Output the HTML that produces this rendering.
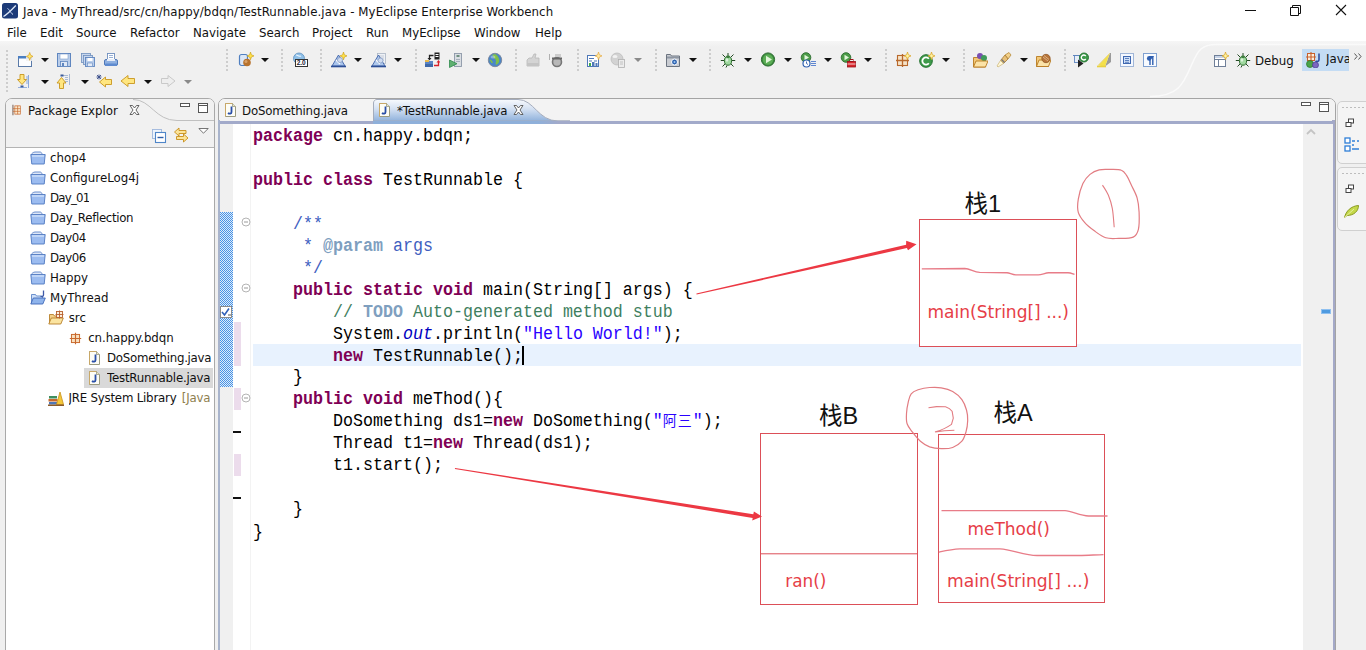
<!DOCTYPE html>
<html>
<head>
<meta charset="utf-8">
<title>Java - MyThread/src/cn/happy/bdqn/TestRunnable.java - MyEclipse Enterprise Workbench</title>
<style>
html,body{margin:0;padding:0;}
body{width:1366px;height:650px;overflow:hidden;background:#f0f0f0;position:relative;
 font-family:"DejaVu Sans","Liberation Sans","Noto Sans CJK SC",sans-serif;font-size:11.8px;color:#000;}
.abs{position:absolute;}
#titlebar{left:0;top:0;width:1366px;height:22px;background:#fff;}
#title{left:23px;top:4px;height:16px;line-height:16px;font-size:11.8px;letter-spacing:.07px;white-space:nowrap;color:#111;}
#menubar{left:0;top:22px;width:1366px;height:19px;background:#fff;}
.mi{position:absolute;top:3px;height:16px;line-height:16px;font-size:11.8px;white-space:nowrap;color:#111;}
#toolbar{left:0;top:41px;width:1366px;height:57px;background:linear-gradient(#f6f6f6,#f0f0f0 6px);}
.ic{position:absolute;width:16px;height:16px;}
.dd{position:absolute;width:0;height:0;border-left:4px solid transparent;border-right:4px solid transparent;border-top:4px solid #111;}
.dd.g{border-top-color:#8a8a8a;}
.sep{position:absolute;width:2px;height:20px;background-image:repeating-linear-gradient(to bottom,#cdcdcd 0,#cdcdcd 2px,transparent 2px,transparent 4px);}
/* package explorer */
#pe{left:5px;top:98px;width:210px;height:560px;background:#fff;border:1px solid #a9a9a9;border-radius:7px 7px 0 0;box-sizing:border-box;}
.tr{position:absolute;height:20px;line-height:20px;font-size:11.8px;white-space:nowrap;color:#111;}
/* editor */
#ed{left:218px;top:98px;width:1118px;height:560px;background:#fff;border:1px solid #a4a4a4;border-radius:7px 7px 0 0;box-sizing:border-box;}
#code{left:253px;top:125.7px;font-family:"Liberation Mono","Noto Sans CJK SC",monospace;font-size:16.667px;line-height:20.952px;white-space:pre;color:#000;transform:scaleY(1.05);transform-origin:0 0;}
#code .cj{font-size:14px;letter-spacing:1px;}
#code b{color:#7f0055;font-weight:bold;}
#code .c{color:#3f7f5f;}
#code .j{color:#3f5fbf;}
#code .jt{color:#7f9fbf;font-weight:bold;}
#code .s{color:#2a00ff;}
#code .f{color:#0000c0;font-style:italic;}
.red{fill:none;stroke:#e8474a;}
</style>
</head>
<body>
<!-- TITLE BAR -->
<div id="titlebar" class="abs">
  <svg class="abs" style="left:2px;top:3px" width="16" height="16" viewBox="0 0 16 16"><rect x="0" y="0" width="16" height="15.500" rx="2.500" fill="#1d3b79"/><path d="M1.500 13.500 C5 11.500 9.500 7 13.800 2.500" stroke="#dfe9f8" stroke-width="1.300" fill="none"/><path d="M5.500 5.500 C7.500 7 8 7.500 8.300 8.300 C8.800 9.500 9.500 10.500 11 11.500" stroke="#cfdcf2" stroke-width="1" fill="none"/></svg>
  <div id="title" class="abs">Java - MyThread/src/cn/happy/bdqn/TestRunnable.java - MyEclipse Enterprise Workbench</div>
  <svg class="abs" style="left:1240px;top:0" width="126" height="22" viewBox="0 0 126 22">
    <path d="M5 10.5H16" stroke="#111" stroke-width="1"/>
    <path d="M50.500 7.500h8v8h-8z M52.500 7.500v-2h8v8h-2" stroke="#111" stroke-width="1" fill="none"/>
    <path d="M96 5L106 15M106 5L96 15" stroke="#111" stroke-width="1.1"/>
  </svg>
</div>
<!-- MENU BAR -->
<div id="menubar" class="abs">
  <span class="mi" style="left:7px">File</span>
  <span class="mi" style="left:40px">Edit</span>
  <span class="mi" style="left:76px">Source</span>
  <span class="mi" style="left:130px">Refactor</span>
  <span class="mi" style="left:193px">Navigate</span>
  <span class="mi" style="left:259px">Search</span>
  <span class="mi" style="left:312px">Project</span>
  <span class="mi" style="left:366px">Run</span>
  <span class="mi" style="left:402px">MyEclipse</span>
  <span class="mi" style="left:474px">Window</span>
  <span class="mi" style="left:535px">Help</span>
</div>
<!-- TOOLBAR -->
<div id="toolbar" class="abs">
<div class="abs" style="left:1302px;top:8px;width:47px;height:22px;background:#c4dcf4;"></div>
<i class="sep" style="left:6px;top:9px;height:44px"></i>
<svg class="ic" style="left:17px;top:11px;width:16px;height:16px" viewBox="0 0 16 16" preserveAspectRatio="none" ><rect x="1.500" y="4.500" width="13" height="10" fill="#fcfdff" stroke="#5a7aa8"/><rect x="1" y="4" width="14" height="2.500" fill="#4a7ec2"/><rect x="9" y="0" width="7" height="9" fill="#f0f0f0" fill-opacity=".85"/><path d="M12.700 .5L13.600 3.200 16 4.400 13.600 5.500 12.700 8.300 11.800 5.500 9.400 4.400 11.800 3.200Z" fill="#ffe870" stroke="#d8a020" stroke-width=".7"/></svg>
<svg class="ic" style="left:56px;top:11px;width:16px;height:16px" viewBox="0 0 16 16" preserveAspectRatio="none" ><rect x="1.500" y="1.500" width="13" height="13" fill="#b9cdea" stroke="#5f86bf"/><rect x="4" y="2" width="8" height="5" fill="#fff" stroke="#7d9dcc" stroke-width=".6"/><rect x="4.500" y="9.500" width="7" height="5" fill="#dfe8f6" stroke="#5f86bf" stroke-width=".8"/><rect x="6" y="11" width="2" height="3" fill="#5f86bf"/></svg>
<svg class="ic" style="left:80px;top:11px;width:16px;height:16px" viewBox="0 0 16 16" preserveAspectRatio="none" ><rect x="1.500" y="1.500" width="9" height="9" fill="#c8d7ee" stroke="#6f8fbe" stroke-width=".8"/><rect x="3.500" y="3.500" width="9" height="9" fill="#c8d7ee" stroke="#6f8fbe" stroke-width=".8"/><rect x="5.500" y="5.500" width="9" height="9" fill="#b9cdea" stroke="#5f86bf" stroke-width=".9"/><rect x="7.500" y="6" width="5" height="3" fill="#fff"/><rect x="7.500" y="11" width="5" height="3.500" fill="#e4ecf8" stroke="#5f86bf" stroke-width=".6"/></svg>
<svg class="ic" style="left:103px;top:11px;width:16px;height:16px" viewBox="0 0 16 16" preserveAspectRatio="none" ><rect x="4.500" y="1.500" width="7" height="6" fill="#fff" stroke="#6f8fbe" stroke-width=".9"/><path d="M6 3.500h4M6 5.500h4" stroke="#7d9dcc" stroke-width=".8"/><rect x="1.500" y="7.500" width="13" height="6" rx="1.500" fill="#8fb0e0" stroke="#4f78b8"/><rect x="2" y="11.500" width="12" height="2.500" rx="1" fill="#5f8bd0"/><rect x="4" y="7" width="8" height="2" fill="#e8eef8"/></svg>
<svg class="ic" style="left:238px;top:11px;width:16px;height:16px" viewBox="0 0 16 16" preserveAspectRatio="none" ><rect x="1.500" y="2.500" width="8" height="11" rx="2" fill="#dbe7f7" stroke="#4f7fc0" stroke-width="1.200"/><circle cx="9" cy="10.500" r="3.800" fill="#b8732e"/><circle cx="8" cy="9.500" r="1.500" fill="#d9a066"/><path d="M12.500 0L13.400 2.800 16 3.900 13.400 5 12.500 7.800 11.600 5 9 3.900 11.600 2.800Z" fill="#ffe24a" stroke="#c89a10" stroke-width=".6"/></svg>
<svg class="ic" style="left:292px;top:11px;width:16px;height:16px" viewBox="0 0 16 16" preserveAspectRatio="none" ><circle cx="7" cy="6.500" r="5.500" fill="#8fc0e8" stroke="#5f90c0" stroke-width=".8"/><path d="M4 3c2 0 3 2 5 1M3 8c2-1 3 1 4 0" stroke="#e8f4ff" stroke-width="1.200" fill="none"/><rect x="3.500" y="7.500" width="12" height="7" fill="#fff" stroke="#333" stroke-width="1"/><text x="4.700" y="13.300" font-family="Liberation Sans,sans-serif" font-size="6.500" font-weight="bold" fill="#223">2.0</text></svg>
<svg class="ic" style="left:331px;top:11px;width:16px;height:16px" viewBox="0 0 16 16" preserveAspectRatio="none" ><path d="M7.500 3L1 14h13z" fill="#a9c4ec" stroke="#3f63a8" stroke-width=".9"/><path d="M0 14.500h15" stroke="#2d4f96" stroke-width="1.600"/><path d="M5 8l4 4" stroke="#fff" stroke-width="1.200"/><circle cx="9" cy="8" r="2.500" fill="#d0dcf0" stroke="#7d95c0" stroke-width=".7"/><path d="M12.500 0L13.400 2.800 16 3.900 13.400 5 12.500 7.800 11.600 5 9 3.900 11.600 2.800Z" fill="#ffe24a" stroke="#c89a10" stroke-width=".6"/></svg>
<svg class="ic" style="left:371px;top:11px;width:16px;height:16px" viewBox="0 0 16 16" preserveAspectRatio="none" ><rect x="6.500" y="1.500" width="8" height="10" fill="#eef1f5" stroke="#aab4c4" stroke-width=".8"/><path d="M8 4h5M8 6h5M8 8h5" stroke="#b8c2d0" stroke-width=".8"/><path d="M7.500 3L1 14h13z" fill="#a9c4ec" fill-opacity=".9" stroke="#3f63a8" stroke-width=".9"/><path d="M0 14.500h15" stroke="#2d4f96" stroke-width="1.600"/><path d="M5 8l4 4" stroke="#fff" stroke-width="1.200"/><circle cx="9.500" cy="8.500" r="2.500" fill="#d0dcf0" stroke="#7d95c0" stroke-width=".7"/></svg>
<svg class="ic" style="left:424px;top:11px;width:16px;height:16px" viewBox="0 0 16 16" preserveAspectRatio="none" ><rect x="10.500" y=".5" width="5" height="7" fill="#222"/><path d="M11.500 2.500h3M11.500 4.500h3" stroke="#fff" stroke-width="1"/><path d="M9.500 3.500H5.500v3" stroke="#222" stroke-width="1.300" fill="none"/><path d="M3.500 6h4L5.500 8.500z" fill="#222"/><rect x="1" y="9" width="8" height="6" fill="#5a84c4"/><rect x="1" y="8" width="4" height="2" fill="#e8b84a"/><rect x="1" y="12" width="8" height="3" fill="#3f68a8"/><path d="M10 13.500h4.500V10" stroke="#d8202a" stroke-width="1.300" fill="none"/><path d="M12.500 10.500h4L14.500 8z" fill="#d8202a"/></svg>
<svg class="ic" style="left:448px;top:11px;width:16px;height:16px" viewBox="0 0 16 16" preserveAspectRatio="none" ><rect x="6.500" y="1.500" width="7" height="13" fill="#d9dde2" stroke="#8d98a8" stroke-width=".9"/><rect x="8.500" y="3" width="3" height="2" fill="#6f8f7f"/><path d="M8 7.500h4M8 9.500h4" stroke="#9aa4b2" stroke-width=".8"/><path d="M1.500 8v7.500L9 11.700z" fill="#5fb070" stroke="#2f8a4c" stroke-width=".8"/></svg>
<svg class="ic" style="left:487px;top:11px;width:16px;height:16px" viewBox="0 0 16 16" preserveAspectRatio="none" ><circle cx="8" cy="8" r="6.700" fill="#4a86c8" stroke="#7d8aa0" stroke-width="1"/><path d="M5 3c2 1 1 3 3 4s0 4 1 6c2-1 4-3 3-6s-2-4-4-5z" fill="#7fc04a"/><path d="M3 8c1 1 2 1 2 3" stroke="#7fc04a" stroke-width="1.500" fill="none"/><ellipse cx="6" cy="5" rx="2.500" ry="1.500" fill="#fff" fill-opacity=".35"/></svg>
<svg class="ic" style="left:525px;top:11px;width:16px;height:16px" viewBox="0 0 16 16" preserveAspectRatio="none" ><path d="M2 8l2-2h3l2-4h2l-1 4h4v8H2z" fill="#d4d4d4" stroke="#b8b8b8" stroke-width=".8"/><rect x="2" y="11" width="12" height="3" fill="#c4c4c4"/></svg>
<svg class="ic" style="left:548px;top:11px;width:16px;height:16px" viewBox="0 0 16 16" preserveAspectRatio="none" ><path d="M1.500 2v6" stroke="#b0b0b0" stroke-width="1"/><circle cx="9" cy="10" r="4.500" fill="#b8b8b8" stroke="#777" stroke-width="1.600"/><path d="M4 6.500h10" stroke="#666" stroke-width="2"/><rect x="7" y="2" width="6" height="3" fill="#ccc"/></svg>
<svg class="ic" style="left:586px;top:11px;width:16px;height:16px" viewBox="0 0 16 16" preserveAspectRatio="none" ><rect x="1.500" y="3.500" width="11" height="11" fill="#fff" stroke="#4f78b8" stroke-width="1"/><path d="M3 6.500h5M3 9h3M8 9h3" stroke="#4f78b8" stroke-width="1.200"/><rect x="3" y="11" width="2" height="3" fill="#3fae49"/><rect x="6" y="10" width="2.500" height="4" fill="#4f78b8"/><rect x="9.500" y="11" width="2" height="3" fill="#4f78b8"/><path d="M12.500 0L13.400 2.800 16 3.900 13.400 5 12.500 7.800 11.600 5 9 3.900 11.600 2.800Z" fill="#ffe9a0" stroke="#e0a030" stroke-width=".6"/></svg>
<svg class="ic" style="left:610px;top:11px;width:16px;height:16px" viewBox="0 0 16 16" preserveAspectRatio="none" ><circle cx="7" cy="7" r="6" fill="#d2d2d2" stroke="#bcbcbc" stroke-width=".8"/><ellipse cx="5" cy="4.500" rx="2.500" ry="1.500" fill="#f2f2f2"/><rect x="8.500" y="7.500" width="6" height="8" fill="#ececec" stroke="#b0b0b0" stroke-width=".8"/><path d="M10 10h3M10 12h3" stroke="#b8b8b8" stroke-width=".8"/></svg>
<svg class="ic" style="left:665px;top:11px;width:16px;height:16px" viewBox="0 0 16 16" preserveAspectRatio="none" ><path d="M1.500 2.500h4l1 1.500h8v10.500h-13z" fill="#c9ccd2" stroke="#6c7480" stroke-width="1"/><rect x="2" y="4.500" width="12" height="2" fill="#8d95a2"/><circle cx="9.500" cy="10" r="3" fill="#2f64b0" stroke="#fff" stroke-width="1"/><circle cx="9.500" cy="10" r="1" fill="#9fc4f0"/></svg>
<svg class="ic" style="left:720px;top:11px;width:16px;height:16px" viewBox="0 0 16 16" preserveAspectRatio="none" ><path d="M2.500 2.500l3 3M13.500 2.500l-3 3M.8 8.500h3.500M11.700 8.500h3.500M2.500 14.500l3-3M13.500 14.500l-3-3M8 1v3M6 15.500l1-2" stroke="#244a24" stroke-width="1"/><ellipse cx="8" cy="8.800" rx="3.600" ry="4.400" fill="#9fd89f" stroke="#2f6f2f" stroke-width="1"/><ellipse cx="8" cy="4.800" rx="2" ry="1.400" fill="#3f7f3f"/><ellipse cx="7" cy="8" rx="1.300" ry="1.800" fill="#dcf2dc"/></svg>
<svg class="ic" style="left:760px;top:11px;width:16px;height:16px" viewBox="0 0 16 16" preserveAspectRatio="none" ><circle cx="8" cy="7.500" r="6.600" fill="#3c8c3e" stroke="#2c6c30" stroke-width="1"/><circle cx="8" cy="7.500" r="5.200" fill="#5cae56"/><path d="M6 3.800v7.400L12 7.500z" fill="#e2f6da"/></svg>
<svg class="ic" style="left:800px;top:11px;width:16px;height:16px" viewBox="0 0 16 16" preserveAspectRatio="none" ><circle cx="6" cy="5.500" r="4.800" fill="#4c9c48" stroke="#2c6c30" stroke-width=".9"/><path d="M4.500 2.800v5.400L9 5.500z" fill="#e2f6da"/><circle cx="6.500" cy="11.500" r="3.500" fill="#fff" stroke="#2f5fb0" stroke-width="1.200"/><path d="M6.500 9.500v2l1.500 1" stroke="#2f5fb0" stroke-width=".9" fill="none"/><path d="M11 9.500h5M11 11.500h5M11 13.500h5" stroke="#5f86d0" stroke-width="1"/></svg>
<svg class="ic" style="left:840px;top:11px;width:16px;height:16px" viewBox="0 0 16 16" preserveAspectRatio="none" ><circle cx="6" cy="5.500" r="4.800" fill="#4c9c48" stroke="#2c6c30" stroke-width=".9"/><path d="M4.500 2.800v5.400L9 5.500z" fill="#e2f6da"/><rect x="7.500" y="9.500" width="8" height="5.500" fill="#d8262c" stroke="#9a1218" stroke-width=".8"/><rect x="10" y="7.500" width="3" height="2" fill="none" stroke="#9a1218" stroke-width="1"/><path d="M7.500 12h8" stroke="#fff" stroke-width=".8"/></svg>
<svg class="ic" style="left:895px;top:11px;width:16px;height:16px" viewBox="0 0 16 16" preserveAspectRatio="none" ><rect x="2.500" y="3.500" width="10" height="10" fill="#f6e3c8" stroke="#b8692c" stroke-width="1.100"/><path d="M7.500 2v13M1 8.500h13" stroke="#b8692c" stroke-width="1.300"/><path d="M12.500 0L13.400 2.800 16 3.900 13.400 5 12.500 7.800 11.600 5 9 3.900 11.600 2.800Z" fill="#fff3a0" stroke="#d8a020" stroke-width=".7"/></svg>
<svg class="ic" style="left:919px;top:11px;width:16px;height:16px" viewBox="0 0 16 16" preserveAspectRatio="none" ><circle cx="7" cy="9" r="6.300" fill="#3e9a4a" stroke="#1f6f2c" stroke-width="1"/><path d="M9.800 6.800A3.600 3.600 0 1 0 9.800 11.200" stroke="#fff" stroke-width="1.800" fill="none"/><path d="M12.500 0L13.400 2.800 16 3.900 13.400 5 12.500 7.800 11.600 5 9 3.900 11.600 2.800Z" fill="#fff3a0" stroke="#d8a020" stroke-width=".7"/></svg>
<svg class="ic" style="left:972px;top:11px;width:16px;height:16px" viewBox="0 0 16 16" preserveAspectRatio="none" ><path d="M1.500 5.500h5l1 1.500h6v8h-12z" fill="#f2c878" stroke="#b87a20" stroke-width=".9"/><circle cx="8" cy="4" r="3" fill="#7a4fb0"/><circle cx="12" cy="6" r="3" fill="#3f9a5a"/><path d="M1.500 15l2.500-6h12l-2.500 6z" fill="#fbe3a8" stroke="#b87a20" stroke-width=".9"/></svg>
<svg class="ic" style="left:996px;top:11px;width:16px;height:16px" viewBox="0 0 16 16" preserveAspectRatio="none" ><path d="M9 3l4-2.500 2 2.500-3 4z" fill="#f2d08a" stroke="#b88a3a" stroke-width=".8"/><path d="M9 3l3 4-4.500 4.500L4.500 8.500z" fill="#e8c078" stroke="#a87a30" stroke-width=".8"/><path d="M4.500 8.500l3 3L2 15l-1-1z" fill="#fff8d8" stroke="#c8b070" stroke-width=".7"/><path d="M5.500 7.500l3 3" stroke="#777" stroke-width="1.400"/></svg>
<svg class="ic" style="left:1035px;top:11px;width:16px;height:16px" viewBox="0 0 16 16" preserveAspectRatio="none" ><path d="M1.500 4.500h5l1 1.500h6v8.500h-12z" fill="#f2c878" stroke="#b87a20" stroke-width=".9"/><path d="M1.500 14.500l2.500-6.500h12l-2.500 6.500z" fill="#fbe3a8" stroke="#b87a20" stroke-width=".9"/><circle cx="11" cy="6.500" r="4.200" fill="#b8753a" stroke="#8a5220" stroke-width=".7"/><path d="M8 5l5 4M9 3.500l5 4" stroke="#e8c8a0" stroke-width=".7"/></svg>
<svg class="ic" style="left:1073px;top:11px;width:16px;height:16px" viewBox="0 0 16 16" preserveAspectRatio="none" ><rect x="1.500" y="3.500" width="5" height="7" fill="#e8eef8" stroke="#5f86bf" stroke-width=".9"/><path d="M0 3.500h8" stroke="#5f86bf" stroke-width="1"/><circle cx="11" cy="5.500" r="4.500" fill="#3e9a4a" stroke="#1f6f2c" stroke-width=".9"/><path d="M12.800 4A2.500 2.500 0 1 0 12.800 7" stroke="#fff" stroke-width="1.300" fill="none"/><path d="M5 7.500v8l5.500-4z" fill="#222"/></svg>
<svg class="ic" style="left:1096px;top:11px;width:16px;height:16px" viewBox="0 0 16 16" preserveAspectRatio="none" ><path d="M14 1l1 0v9l-6 4.500z" fill="#9a9a9a"/><path d="M14 1L2 13.500l7 1z" fill="#f4e04a"/><path d="M1 14.500h9" stroke="#e8d040" stroke-width="1.600"/><path d="M14 1L2 13.500" stroke="#e4d080" stroke-width=".8"/></svg>
<svg class="ic" style="left:1119px;top:11px;width:16px;height:16px" viewBox="0 0 16 16" preserveAspectRatio="none" ><rect x="1.500" y="1.500" width="13" height="13" fill="#f4f8ff" stroke="#4f78b8" stroke-width="1" stroke-dasharray="1 1"/><rect x="4.500" y="4.500" width="7" height="7" fill="#cfe0f8" stroke="#3f68b0" stroke-width="1"/><path d="M6 6.500h4M6 8.500h4M6 10.300h4" stroke="#3f68b0" stroke-width=".8"/></svg>
<svg class="ic" style="left:1142px;top:11px;width:16px;height:16px" viewBox="0 0 16 16" preserveAspectRatio="none" ><rect x="1.500" y="1.500" width="13" height="13" fill="#f8fbff" stroke="#7fa0d0" stroke-width="1"/><path d="M8 4v9M10.800 4v9" stroke="#2f5fb0" stroke-width="1.400"/><path d="M12 4H7.300a2.400 2.400 0 0 0 0 4.800H8z" fill="#2f5fb0"/></svg>
<svg class="ic" style="left:1213px;top:11px;width:16px;height:16px" viewBox="0 0 16 16" preserveAspectRatio="none" ><rect x="1.500" y="3.500" width="11" height="11" fill="#fff" stroke="#6f7f98" stroke-width="1"/><path d="M1.500 7.500h11M5.500 7.500v7" stroke="#6f7f98" stroke-width="1"/><rect x="2" y="4" width="10" height="2" fill="#c8d4e8"/><path d="M12.500 0L13.400 2.800 16 3.900 13.400 5 12.500 7.800 11.600 5 9 3.900 11.600 2.800Z" fill="#fff3a0" stroke="#d8a020" stroke-width=".7"/></svg>
<svg class="ic" style="left:1235px;top:11px;width:16px;height:16px" viewBox="0 0 16 16" preserveAspectRatio="none" ><path d="M2.500 2.500l3 3M13.500 2.500l-3 3M.8 8.500h3.500M11.700 8.500h3.500M2.500 14.500l3-3M13.500 14.500l-3-3M8 1v3M6 15.500l1-2" stroke="#244a24" stroke-width="1"/><ellipse cx="8" cy="8.800" rx="3.600" ry="4.400" fill="#9fd89f" stroke="#2f6f2f" stroke-width="1"/><ellipse cx="8" cy="4.800" rx="2" ry="1.400" fill="#3f7f3f"/><ellipse cx="7" cy="8" rx="1.300" ry="1.800" fill="#dcf2dc"/></svg>
<svg class="ic" style="left:1305px;top:11px;width:16px;height:16px" viewBox="0 0 16 16" preserveAspectRatio="none" ><rect x="2.500" y="1.500" width="7" height="7" fill="#fbeedd" stroke="#c8602c" stroke-width="1"/><path d="M6 0v10M1 5h10" stroke="#c8602c" stroke-width="1.100"/><path d="M14 1.500v6c0 2-2 2.500-3.500 1.500" stroke="#2f4fa0" stroke-width="1.600" fill="none"/><circle cx="5" cy="12" r="3.500" fill="#4aa44a" stroke="#2a7428" stroke-width=".7"/><circle cx="10.500" cy="13" r="3" fill="#7a68c0" stroke="#4a3a90" stroke-width=".7"/></svg>
<i class="dd" style="left:41px;top:17px"></i>
<i class="dd" style="left:261px;top:17px"></i>
<i class="dd" style="left:354px;top:17px"></i>
<i class="dd" style="left:394px;top:17px"></i>
<i class="dd" style="left:472px;top:17px"></i>
<i class="dd" style="left:689px;top:17px"></i>
<i class="dd" style="left:744px;top:17px"></i>
<i class="dd" style="left:784px;top:17px"></i>
<i class="dd" style="left:824px;top:17px"></i>
<i class="dd" style="left:864px;top:17px"></i>
<i class="dd" style="left:942px;top:17px"></i>
<i class="dd" style="left:1020px;top:17px"></i>
<i class="dd g" style="left:634px;top:17px"></i>
<i class="sep" style="left:226px;top:8px;height:22px"></i>
<i class="sep" style="left:281px;top:8px;height:22px"></i>
<i class="sep" style="left:320px;top:8px;height:22px"></i>
<i class="sep" style="left:415px;top:8px;height:22px"></i>
<i class="sep" style="left:515px;top:8px;height:22px"></i>
<i class="sep" style="left:577px;top:8px;height:22px"></i>
<i class="sep" style="left:655px;top:8px;height:22px"></i>
<i class="sep" style="left:709px;top:8px;height:22px"></i>
<i class="sep" style="left:885px;top:8px;height:22px"></i>
<i class="sep" style="left:963px;top:8px;height:22px"></i>
<i class="sep" style="left:1064px;top:8px;height:22px"></i>
<svg class="ic" style="left:17px;top:32px;width:16px;height:16px" viewBox="0 0 16 16" preserveAspectRatio="none" ><path d="M11.500 2v13M9 4h2M9 6h2M9 8h2M9 10h2" stroke="#7fa0d8" stroke-width=".9"/><path d="M3 1.500h4v5h2.500L5 11.500.5 6.500H3z" fill="#ffe680" stroke="#c8961e" stroke-width=".9"/><rect x="3.500" y="12.500" width="3" height="2.500" fill="#3b5a9a"/><path d="M1 14.500h9" stroke="#7fa0d8" stroke-width=".8"/></svg>
<svg class="ic" style="left:56px;top:32px;width:16px;height:16px" viewBox="0 0 16 16" preserveAspectRatio="none" ><path d="M13.500 1v11M7 2.500h5M9 4.500h3M9 6.500h3M9 8.500h3" stroke="#9fb2d0" stroke-width=".9"/><rect x="4.500" y="1.500" width="3" height="2" fill="#3b5a9a"/><path d="M3.500 15.500h4v-5.500h2.500L5.500 4.500 1 10h2.500z" fill="#ffe680" stroke="#c8961e" stroke-width=".9"/></svg>
<svg class="ic" style="left:96px;top:32px;width:16px;height:16px" viewBox="0 0 16 16" preserveAspectRatio="none" ><path d="M1 2l4 4M5 2L1 6M3 1.500v5M.5 4h5" stroke="#3b4f8a" stroke-width=".9"/><path d="M15.500 6.500v5h-6v2.500L3.500 9l6-5v2.500z" fill="#ffe680" stroke="#c8961e" stroke-width=".9"/></svg>
<svg class="ic" style="left:120px;top:32px;width:16px;height:16px" viewBox="0 0 16 16" preserveAspectRatio="none" ><path d="M14.500 5.500v5h-6.500v3L1 8l7-5.500v3z" fill="#ffe680" stroke="#c8961e" stroke-width=".9"/></svg>
<svg class="ic" style="left:160px;top:32px;width:16px;height:16px" viewBox="0 0 16 16" preserveAspectRatio="none" ><path d="M1.500 5.500v5h6.500v3L15 8 8 2.500v3z" fill="#eeeeee" stroke="#c4c4c4" stroke-width=".9"/></svg>
<i class="dd" style="left:41px;top:39px"></i>
<i class="dd" style="left:81px;top:39px"></i>
<i class="dd" style="left:144px;top:39px"></i>
<i class="dd g" style="left:184px;top:39px"></i>
<!-- perspective switcher -->
<svg class="abs" style="left:1150px;top:0" width="216" height="57" viewBox="0 0 216 57"><path d="M0 55.500 C30 55.500 34 41 42 23 C48 9 52 3.500 66 3.500 H216" fill="none" stroke="#fafafa" stroke-width="1.500"/></svg>
<div class="abs" style="left:1255px;top:12px;font-size:11.8px;line-height:16px;color:#111">Debug</div>
<div class="abs" style="left:1326px;top:10px;width:23px;overflow:hidden;font-size:11.8px;line-height:16px;color:#111;white-space:nowrap">Java</div>
<svg class="abs" style="left:1354px;top:11.500px" width="8" height="7" viewBox="0 0 8 7"><path d="M.5.5L3 3.500.5 6.500M4.500.5L7 3.500 4.500 6.500" fill="none" stroke="#555" stroke-width="1"/></svg>

</div>
<!-- PACKAGE EXPLORER -->
<div id="pe" class="abs"></div>
<div class="abs" style="left:6px;top:99px;width:208px;height:48px;background:#f1f1f1;border-radius:6px 6px 0 0"></div>
<div class="abs" style="left:6px;top:147px;width:208px;height:1px;background:#b4b4b4"></div>
<svg class="abs" style="left:5px;top:98px" width="210" height="26" viewBox="0 0 210 26"><path d="M128 1.500 C146 1.500 150 22.500 172 22.500 H209" fill="none" stroke="#c0c0c0" stroke-width="1"/></svg>
<svg class="ic" style="left:11.5px;top:103.5px;width:10px;height:12px" viewBox="0 0 16 16" preserveAspectRatio="none"><path d="M1.500 1v14" stroke="#6a4a3a" stroke-width="1.300"/><rect x="4.500" y="2.500" width="9" height="11" fill="#fbe8cc" stroke="#c8682c" stroke-width="1"/><path d="M9 2.500v11M1.500 6.200h12M1.500 9.800h12" stroke="#c8682c" stroke-width="1"/></svg>
<div class="abs" style="left:28px;top:103px;font-size:11.8px;line-height:16px;white-space:nowrap;color:#111;letter-spacing:0px">Package Explor</div>
<svg class="abs" style="left:129px;top:105px" width="11" height="10" viewBox="0 0 11 10"><path d="M1 .5h2.500L5.500 3 7.500.5H10L7 5l3 4.500H7.500L5.500 7 3.500 9.500H1L4 5z" fill="#fff" stroke="#555" stroke-width=".9"/></svg>
<svg class="abs" style="left:180px;top:102px" width="30" height="12" viewBox="0 0 30 12"><rect x=".5" y="1.500" width="9" height="3" fill="#fff" stroke="#555" stroke-width="1"/><rect x="18.500" y="1.500" width="9" height="9" fill="#fff" stroke="#555" stroke-width="1"/><path d="M18.500 3.500h9" stroke="#555" stroke-width="1"/></svg>
<svg class="ic" style="left:151px;top:128px;width:16px;height:16px" viewBox="0 0 16 16" preserveAspectRatio="none"><rect x="1.500" y="1.500" width="9" height="9" fill="#eef4fc" stroke="#9fb8dc" stroke-width=".9"/><rect x="4.500" y="4.500" width="10" height="10" fill="#fff" stroke="#4f86c8" stroke-width="1.100"/><path d="M6.500 9.500h6" stroke="#2f5fa8" stroke-width="1.400"/></svg>
<svg class="ic" style="left:173px;top:127px;width:16px;height:16px" viewBox="0 0 16 16" preserveAspectRatio="none"><path d="M1.500 5L6 1v2.500h7v3h-7V9z" fill="#fbe49a" stroke="#c8901a" stroke-width=".9"/><path d="M15 11l-4.500-4v2.500h-7v3h7V15z" fill="#fbe49a" stroke="#c8901a" stroke-width=".9"/></svg>
<svg class="abs" style="left:198px;top:128px" width="11" height="6" viewBox="0 0 11 6"><path d="M.8.500h9.400L5.500 5.200z" fill="#fff" stroke="#666" stroke-width=".9"/></svg>
<svg class="ic" style="left:30px;top:150px;width:16px;height:16px" viewBox="0 0 16 16" preserveAspectRatio="none"><path d="M1.500 4.500c0-1 2-2.500 3.500-2.500h5c1 0 2 1 2 2" fill="#dfe8f8" stroke="#5f86c8" stroke-width=".9"/><path d="M.8 4.500h14.400l-1 9.500H1.800z" fill="#9cbcf0" stroke="#4f78c0" stroke-width=".9"/><path d="M2 6h12" stroke="#d8e6fb" stroke-width="1.200"/></svg>
<div class="tr" style="left:50px;top:148px;max-width:163px;overflow:hidden;letter-spacing:0px">chop4</div>
<svg class="ic" style="left:30px;top:170px;width:16px;height:16px" viewBox="0 0 16 16" preserveAspectRatio="none"><path d="M1.500 4.500c0-1 2-2.500 3.500-2.500h5c1 0 2 1 2 2" fill="#dfe8f8" stroke="#5f86c8" stroke-width=".9"/><path d="M.8 4.500h14.400l-1 9.500H1.800z" fill="#9cbcf0" stroke="#4f78c0" stroke-width=".9"/><path d="M2 6h12" stroke="#d8e6fb" stroke-width="1.200"/></svg>
<div class="tr" style="left:50px;top:168px;max-width:163px;overflow:hidden;letter-spacing:0px">ConfigureLog4j</div>
<svg class="ic" style="left:30px;top:190px;width:16px;height:16px" viewBox="0 0 16 16" preserveAspectRatio="none"><path d="M1.500 4.500c0-1 2-2.500 3.500-2.500h5c1 0 2 1 2 2" fill="#dfe8f8" stroke="#5f86c8" stroke-width=".9"/><path d="M.8 4.500h14.400l-1 9.500H1.800z" fill="#9cbcf0" stroke="#4f78c0" stroke-width=".9"/><path d="M2 6h12" stroke="#d8e6fb" stroke-width="1.200"/></svg>
<div class="tr" style="left:50px;top:188px;max-width:163px;overflow:hidden;letter-spacing:-0.8px">Day_01</div>
<svg class="ic" style="left:30px;top:210px;width:16px;height:16px" viewBox="0 0 16 16" preserveAspectRatio="none"><path d="M1.500 4.500c0-1 2-2.500 3.500-2.500h5c1 0 2 1 2 2" fill="#dfe8f8" stroke="#5f86c8" stroke-width=".9"/><path d="M.8 4.500h14.400l-1 9.500H1.800z" fill="#9cbcf0" stroke="#4f78c0" stroke-width=".9"/><path d="M2 6h12" stroke="#d8e6fb" stroke-width="1.200"/></svg>
<div class="tr" style="left:50px;top:208px;max-width:163px;overflow:hidden;letter-spacing:-0.33px">Day_Reflection</div>
<svg class="ic" style="left:30px;top:230px;width:16px;height:16px" viewBox="0 0 16 16" preserveAspectRatio="none"><path d="M1.500 4.500c0-1 2-2.500 3.500-2.500h5c1 0 2 1 2 2" fill="#dfe8f8" stroke="#5f86c8" stroke-width=".9"/><path d="M.8 4.500h14.400l-1 9.500H1.800z" fill="#9cbcf0" stroke="#4f78c0" stroke-width=".9"/><path d="M2 6h12" stroke="#d8e6fb" stroke-width="1.200"/></svg>
<div class="tr" style="left:50px;top:228px;max-width:163px;overflow:hidden;letter-spacing:-0.5px">Day04</div>
<svg class="ic" style="left:30px;top:250px;width:16px;height:16px" viewBox="0 0 16 16" preserveAspectRatio="none"><path d="M1.500 4.500c0-1 2-2.500 3.500-2.500h5c1 0 2 1 2 2" fill="#dfe8f8" stroke="#5f86c8" stroke-width=".9"/><path d="M.8 4.500h14.400l-1 9.500H1.800z" fill="#9cbcf0" stroke="#4f78c0" stroke-width=".9"/><path d="M2 6h12" stroke="#d8e6fb" stroke-width="1.200"/></svg>
<div class="tr" style="left:50px;top:248px;max-width:163px;overflow:hidden;letter-spacing:-0.5px">Day06</div>
<svg class="ic" style="left:30px;top:270px;width:16px;height:16px" viewBox="0 0 16 16" preserveAspectRatio="none"><path d="M1.500 4.500c0-1 2-2.500 3.500-2.500h5c1 0 2 1 2 2" fill="#dfe8f8" stroke="#5f86c8" stroke-width=".9"/><path d="M.8 4.500h14.400l-1 9.500H1.800z" fill="#9cbcf0" stroke="#4f78c0" stroke-width=".9"/><path d="M2 6h12" stroke="#d8e6fb" stroke-width="1.200"/></svg>
<div class="tr" style="left:50px;top:268px;max-width:163px;overflow:hidden;letter-spacing:0px">Happy</div>
<svg class="ic" style="left:30px;top:290px;width:16px;height:16px" viewBox="0 0 16 16" preserveAspectRatio="none"><path d="M1.500 4.500h4l1 1.500h6v7.500h-11z" fill="#cfe0f8" stroke="#5f86c8" stroke-width=".9"/><path d="M.8 14l2.500-6h12l-2.500 6z" fill="#8fb4ec" stroke="#3f68b8" stroke-width=".9"/><path d="M13.500 .5v4.500c0 1.500-1.500 2-3 1.200" stroke="#3f5aa8" stroke-width="1.300" fill="none"/></svg>
<div class="tr" style="left:50px;top:288px;max-width:163px;overflow:hidden;letter-spacing:0px">MyThread</div>
<svg class="ic" style="left:48px;top:310px;width:16px;height:16px" viewBox="0 0 16 16" preserveAspectRatio="none"><path d="M1.500 4.500h4l1 1.500h6v7.500h-11z" fill="#f4d088" stroke="#b8802a" stroke-width=".9"/><path d="M.8 14l2.500-6h12l-2.500 6z" fill="#fbe4a0" stroke="#b8802a" stroke-width=".9"/><rect x="8.500" y="1.500" width="6" height="6" fill="#fbeedd" stroke="#b8602c" stroke-width=".9"/><path d="M11.500 .5v8M7.500 4.500h8" stroke="#b8602c" stroke-width=".9"/></svg>
<div class="tr" style="left:68.7px;top:308px;max-width:144.3px;overflow:hidden;letter-spacing:0px">src</div>
<svg class="ic" style="left:68.5px;top:331.5px;width:13px;height:13px" viewBox="0 0 16 16" preserveAspectRatio="none"><rect x="3" y="3" width="10" height="10" fill="#f8e0c0" stroke="#c8682c" stroke-width="1.200"/><path d="M8 1v14M1 8h14" stroke="#c8682c" stroke-width="1.400"/></svg>
<div class="tr" style="left:88.2px;top:328px;max-width:124.8px;overflow:hidden;letter-spacing:-0.08px">cn.happy.bdqn</div>
<svg class="ic" style="left:87px;top:350px;width:16px;height:16px" viewBox="0 0 16 16" preserveAspectRatio="none"><path d="M2.500 1.500h7l3 3v10h-10z" fill="#fdfdf6" stroke="#9a9a80" stroke-width="1"/><path d="M2.500 14.500v-13h7" fill="none" stroke="#c8a868" stroke-width="1"/><path d="M9.500 1.500v3h3" fill="#e8e4c8" stroke="#9a9a80" stroke-width=".8"/><path d="M8.500 4.500v5.500c0 1.800-2 2.200-3.500 1" stroke="#2a4fa8" stroke-width="1.800" fill="none"/></svg>
<div class="tr" style="left:107px;top:348px;max-width:106px;overflow:hidden;letter-spacing:-0.27px">DoSomething.java</div>
<div class="abs" style="left:84px;top:368px;width:129px;height:20px;background:#d9d9d9"></div>
<svg class="ic" style="left:87px;top:370px;width:16px;height:16px" viewBox="0 0 16 16" preserveAspectRatio="none"><path d="M2.500 1.500h7l3 3v10h-10z" fill="#fdfdf6" stroke="#9a9a80" stroke-width="1"/><path d="M2.500 14.500v-13h7" fill="none" stroke="#c8a868" stroke-width="1"/><path d="M9.500 1.500v3h3" fill="#e8e4c8" stroke="#9a9a80" stroke-width=".8"/><path d="M8.500 4.500v5.500c0 1.800-2 2.200-3.500 1" stroke="#2a4fa8" stroke-width="1.800" fill="none"/></svg>
<div class="tr" style="left:107px;top:368px;max-width:106px;overflow:hidden;letter-spacing:-0.22px">TestRunnable.java</div>
<svg class="ic" style="left:48px;top:390px;width:16px;height:16px" viewBox="0 0 16 16" preserveAspectRatio="none"><rect x="1" y="6" width="8" height="2.500" fill="#3f8f5f"/><rect x="0.500" y="9" width="9" height="2.500" fill="#c8682c"/><rect x="1" y="12" width="8" height="2.500" fill="#4f78b8"/><path d="M12 2l3.500 12.500h-7z" fill="#f4c83a" stroke="#c8901a" stroke-width=".8"/><rect x="0" y="14.500" width="16" height="1.500" fill="#8a5a2a"/></svg>
<div class="tr" style="left:68.5px;top:388px;max-width:144.5px;overflow:hidden;letter-spacing:-0.22px">JRE System Library <span style="color:#8f7f4f;margin-left:1.8px">[Java</span></div>

<!-- EDITOR -->
<div id="ed" class="abs"></div>
<div class="abs" style="left:219px;top:99px;width:1116px;height:22px;background:#f3f3f3;border-radius:6px 6px 0 0"></div>
<div class="abs" style="left:219px;top:121px;width:1116px;height:3px;background:#a2aaca"></div><div class="abs" style="left:373px;top:121px;width:186px;height:3px;background:linear-gradient(to right,#8fb0da 0,#8fb0da 165px,#a2aaca 186px)"></div>
<div class="abs" style="left:218px;top:120px;width:2px;height:530px;background:#a9b4cc"></div>
<div class="abs" style="left:1332px;top:120px;width:3px;height:530px;background:#a4a9c8"></div>
<svg class="abs" style="left:370px;top:98px" width="200" height="23" viewBox="0 0 200 23"><defs><linearGradient id="tg" x1="0" y1="0" x2="0" y2="1"><stop offset="0" stop-color="#f8fafd"/><stop offset=".45" stop-color="#d3e0f2"/><stop offset="1" stop-color="#90b2dc"/></linearGradient></defs><path d="M3.500 23V5c0-2 1.500-3.500 3.500-3.500H148c16 0 20 21.500 40 21.500H200V23z" fill="url(#tg)" stroke="#a4acbc" stroke-width="1"/></svg>
<svg class="ic" style="left:223px;top:102px;width:16px;height:16px" viewBox="0 0 16 16" preserveAspectRatio="none"><path d="M2.500 1.500h7l3 3v10h-10z" fill="#fdfdf6" stroke="#9a9a80" stroke-width="1"/><path d="M2.500 14.500v-13h7" fill="none" stroke="#c8a868" stroke-width="1"/><path d="M9.500 1.500v3h3" fill="#e8e4c8" stroke="#9a9a80" stroke-width=".8"/><path d="M8.500 4.500v5.500c0 1.800-2 2.200-3.500 1" stroke="#2a4fa8" stroke-width="1.800" fill="none"/></svg>
<div class="abs" style="left:242px;top:103px;font-size:11.8px;line-height:16px;letter-spacing:-.17px;white-space:nowrap;color:#111">DoSomething.java</div>
<svg class="ic" style="left:377px;top:102px;width:16px;height:16px" viewBox="0 0 16 16" preserveAspectRatio="none"><path d="M2.500 1.500h7l3 3v10h-10z" fill="#fdfdf6" stroke="#9a9a80" stroke-width="1"/><path d="M2.500 14.500v-13h7" fill="none" stroke="#c8a868" stroke-width="1"/><path d="M9.500 1.500v3h3" fill="#e8e4c8" stroke="#9a9a80" stroke-width=".8"/><path d="M8.500 4.500v5.500c0 1.800-2 2.200-3.500 1" stroke="#2a4fa8" stroke-width="1.800" fill="none"/></svg>
<div class="abs" style="left:397px;top:103px;font-size:11.8px;line-height:16px;letter-spacing:-.14px;white-space:nowrap;color:#111">*TestRunnable.java</div>
<svg class="abs" style="left:513px;top:105px" width="11" height="10" viewBox="0 0 11 10"><path d="M1 .5h2.500L5.500 3 7.500.5H10L7 5l3 4.500H7.500L5.500 7 3.500 9.500H1L4 5z" fill="#fff" stroke="#555" stroke-width=".9"/></svg>
<svg class="abs" style="left:1301px;top:101px" width="30" height="12" viewBox="0 0 30 12"><rect x=".5" y="1.500" width="9" height="3" fill="#fff" stroke="#555" stroke-width="1"/><rect x="18.500" y="1.500" width="9" height="9" fill="#fff" stroke="#555" stroke-width="1"/><path d="M18.500 3.500h9" stroke="#555" stroke-width="1"/></svg>
<div class="abs" style="left:220px;top:124px;width:13px;height:526px;background:#f0f0f0"></div>
<svg class="abs" style="left:220px;top:212px" width="13" height="175"><defs><pattern id="hp" width="2" height="2" patternUnits="userSpaceOnUse"><rect width="2" height="2" fill="#dcecfb"/><rect width="1" height="1" fill="#4a92e4"/><rect x="1" y="1" width="1" height="1" fill="#4a92e4"/></pattern></defs><rect width="13" height="175" fill="url(#hp)"/></svg>
<div class="abs" style="left:250px;top:124px;width:1px;height:526px;background:#f3f3f3"></div>
<div class="abs" style="left:234px;top:322px;width:7px;height:44px;background:#ecdcec"></div>
<div class="abs" style="left:234px;top:388px;width:7px;height:22px;background:#ecdcec"></div>
<div class="abs" style="left:234px;top:454px;width:7px;height:22px;background:#ecdcec"></div>
<div class="abs" style="left:233px;top:431px;width:8px;height:2px;background:#111"></div>
<div class="abs" style="left:233px;top:497px;width:8px;height:2px;background:#111"></div>
<svg class="abs" style="left:220px;top:305px" width="13" height="14" viewBox="0 0 13 14"><rect x=".5" y="1.500" width="11" height="11" fill="#fff" stroke="#8a8a8a" stroke-width="1"/><path d="M2 7l2.500 3L9 3.500" fill="none" stroke="#2f5fb8" stroke-width="1.600"/><path d="M8 10h3" stroke="#555" stroke-width="1"/></svg>
<svg class="abs" style="left:241px;top:217px" width="10" height="10" viewBox="0 0 10 10"><circle cx="5" cy="5" r="4" fill="#fff" stroke="#b4b4b4" stroke-width="1"/><path d="M3 5h4" stroke="#9a9a9a" stroke-width="1"/></svg>
<svg class="abs" style="left:241px;top:283px" width="10" height="10" viewBox="0 0 10 10"><circle cx="5" cy="5" r="4" fill="#fff" stroke="#b4b4b4" stroke-width="1"/><path d="M3 5h4" stroke="#9a9a9a" stroke-width="1"/></svg>
<svg class="abs" style="left:241px;top:393px" width="10" height="10" viewBox="0 0 10 10"><circle cx="5" cy="5" r="4" fill="#fff" stroke="#b4b4b4" stroke-width="1"/><path d="M3 5h4" stroke="#9a9a9a" stroke-width="1"/></svg>
<div class="abs" style="left:253px;top:344px;width:1048px;height:22px;background:#e8f2fe"></div>
<div class="abs" style="left:522px;top:346px;width:1.500px;height:19px;background:#000"></div>
<div class="abs" style="left:1303px;top:124px;width:30px;height:526px;background:#f0f0f0"></div>
<svg class="abs" style="left:1306px;top:128px" width="10" height="7" viewBox="0 0 10 7"><path d="M1 6l4-4 4 4" fill="none" stroke="#c4c4c4" stroke-width="1.800"/></svg>
<div class="abs" style="left:1321px;top:309px;width:10px;height:5px;background:#4f9be0;box-sizing:border-box;border:1px solid #8fc0f0"></div>
<div class="abs" style="left:1337px;top:101px;width:35px;height:63px;border:1px solid #d0d0d0;border-radius:5px;box-sizing:border-box;background:#f4f4f4"></div>
<div class="abs" style="left:1342px;top:107px;width:24px;height:1px;background-image:repeating-linear-gradient(to right,#bdbdbd 0,#bdbdbd 2px,transparent 2px,transparent 4px)"></div>
<svg class="abs" style="left:1345px;top:118px" width="10" height="10" viewBox="0 0 10 10"><rect x="3.500" y="1" width="5" height="4" fill="#fff" stroke="#444" stroke-width="1"/><rect x="1" y="4.500" width="5" height="4" fill="#fff" stroke="#444" stroke-width="1"/></svg>
<div class="abs" style="left:1337px;top:167px;width:35px;height:64px;border:1px solid #d0d0d0;border-radius:5px;box-sizing:border-box;background:#f4f4f4"></div>
<div class="abs" style="left:1342px;top:173px;width:24px;height:1px;background-image:repeating-linear-gradient(to right,#bdbdbd 0,#bdbdbd 2px,transparent 2px,transparent 4px)"></div>
<svg class="abs" style="left:1345px;top:184px" width="10" height="10" viewBox="0 0 10 10"><rect x="3.500" y="1" width="5" height="4" fill="#fff" stroke="#444" stroke-width="1"/><rect x="1" y="4.500" width="5" height="4" fill="#fff" stroke="#444" stroke-width="1"/></svg>
<svg class="abs" style="left:1344px;top:137px" width="16" height="15" viewBox="0 0 16 15"><rect x="1" y="1" width="5" height="5" fill="#fff" stroke="#2f7fd8" stroke-width="1.300"/><rect x="1" y="9" width="5" height="5" fill="#fff" stroke="#2f7fd8" stroke-width="1.300"/><path d="M8 4h3M13 4h2M8 8h2M8 12h7" stroke="#2f7fd8" stroke-width="1.400"/></svg>
<svg class="abs" style="left:1343px;top:204px" width="17" height="15" viewBox="0 0 17 15"><path d="M1.500 13.500C3 7 8 2 15.500 1.500 15.500 7 11 11.500 4 11.500z" fill="#c4d84a" stroke="#8a9a20" stroke-width="1"/><path d="M1.500 13.500L11 5" stroke="#e8f0a0" stroke-width="1"/></svg>

<div id="code" class="abs"><b>package</b> cn.happy.bdqn;

<b>public</b> <b>class</b> TestRunnable {

    <span class="j">/**</span>
<span class="j">     * </span><span class="jt">@param</span><span class="j"> args</span>
<span class="j">     */</span>
    <b>public</b> <b>static</b> <b>void</b> main(String[] args) {
        <span class="c">// </span><span class="jt">TODO</span><span class="c"> Auto-generated method stub</span>
        System.<span class="f">out</span>.println(<span class="s">"Hello World!"</span>);
        <b>new</b> TestRunnable();
    }
    <b>public</b> <b>void</b> meThod(){
        DoSomething ds1=<b>new</b> DoSomething(<span class="s">"<span class="cj">阿三</span>"</span>);
        Thread t1=<b>new</b> Thread(ds1);
        t1.start();

    }
}</div>
<svg class="abs" style="left:0;top:0" width="1366" height="650" viewBox="0 0 1366 650" font-family="Liberation Sans, Noto Sans CJK SC, sans-serif">
  <!-- boxes -->
  <rect x="919.500" y="219.500" width="157" height="127" fill="#fff" stroke="#dc4f58" stroke-width="1"/>
  <rect x="760.500" y="433.500" width="157" height="171" fill="#fff" stroke="#dc4f58" stroke-width="1"/>
  <rect x="938.500" y="434.500" width="166" height="168" fill="#fff" stroke="#dc4f58" stroke-width="1"/>
  <!-- inner lines -->
  <path d="M921.800 268.900 L964.800 268.500 C970 268.800 974 272 979.700 272.400 L1007 272.700 C1010 273 1012 274.800 1015.800 274.900 L1038.200 274.900 C1042 274.800 1045 273 1048.800 272.800 L1068 272.700 C1071 272.900 1072.500 273.800 1074.500 274.400" fill="none" stroke="#e87c88" stroke-width="1.400"/>
  <path d="M761 553.800H917.500" fill="none" stroke="#dc4f58" stroke-width="1"/>
  <path d="M941.500 510.700 L1065 510.700 C1072 511 1080 515.800 1088.500 516 L1107.500 516" fill="none" stroke="#e87c88" stroke-width="1.300"/>
  <path d="M938.800 552.200 C946 550.500 952 549 959.800 548.800 L1000 548.800 C1012 549.500 1024 555.200 1037 555.500 L1079 555.500 C1088 555.300 1096 554.800 1103.500 554.600" fill="none" stroke="#e87c88" stroke-width="1.300"/>
  <!-- circles -->
  <path d="M1099.2 169.8 C1102.5 169.0 1106.0 169.3 1109.7 169.4 C1113.4 169.5 1118.6 169.1 1121.4 170.2 C1124.2 171.2 1125.1 173.3 1126.7 175.7 C1128.3 178.1 1129.5 181.1 1131.2 184.8 C1132.9 188.5 1135.8 193.3 1137.1 197.9 C1138.4 202.5 1138.9 207.1 1139.1 212.3 C1139.3 217.5 1139.4 225.2 1138.4 229.3 C1137.4 233.4 1136.5 235.6 1133.2 237.1 C1129.9 238.6 1123.4 238.3 1118.8 238.4 C1114.2 238.5 1109.9 239.1 1105.8 237.8 C1101.7 236.5 1097.5 233.1 1094.0 230.6 C1090.5 228.1 1087.4 225.8 1084.8 222.7 C1082.2 219.6 1079.4 216.2 1078.3 212.3 C1077.2 208.4 1077.5 204.0 1078.3 199.2 C1079.1 194.4 1081.0 187.6 1082.9 183.5 C1084.9 179.4 1087.3 176.7 1090.0 174.4 C1092.7 172.1 1095.9 170.6 1099.2 169.8Z" fill="none" stroke="#e27c82" stroke-width="1.200"/>
  <path d="M1102.5 185.1 C1103.5 186.8 1106.8 191.4 1108.4 195.3 C1110.0 199.2 1111.3 203.1 1112.3 208.4 C1113.3 213.7 1113.9 224.2 1114.2 227.3" fill="none" stroke="#e27c82" stroke-width="1.100"/>
  <path d="M911.2 393.8 C912.8 391.8 915.0 390.9 918.1 389.8 C921.2 388.8 925.8 387.8 929.6 387.5 C933.5 387.2 937.4 387.1 941.2 387.8 C945.1 388.5 949.2 389.5 952.7 391.5 C956.2 393.5 959.6 396.5 961.9 399.6 C964.2 402.7 965.5 406.5 966.5 410.0 C967.5 413.5 967.8 416.8 967.7 420.4 C967.6 424.0 967.0 428.4 966.0 431.9 C965.0 435.4 964.1 438.6 961.9 441.2 C959.7 443.8 956.2 446.2 952.7 447.5 C949.2 448.8 945.1 448.8 941.2 448.7 C937.4 448.6 933.1 448.1 929.6 446.9 C926.1 445.6 923.3 443.7 920.4 441.2 C917.5 438.7 914.5 434.8 912.3 431.9 C910.1 429.0 908.1 426.9 907.1 423.8 C906.1 420.7 906.3 417.1 906.5 413.5 C906.7 409.9 907.5 405.2 908.3 401.9 C909.1 398.6 909.6 395.8 911.2 393.8Z" fill="none" stroke="#e27c82" stroke-width="1.200"/>
  <path d="M928.500 407.700 L936.500 406.600 L945.500 406.700 Q950 408.200 952.100 411.200 L953.300 418.100 L951.500 424.400 Q945 429 935.400 431.900 L944.600 430.800 L954.400 430.200" fill="none" stroke="#e27c82" stroke-width="1.100" stroke-linejoin="round"/>
  <!-- arrows -->
  <path d="M696.400 293.500 L906.100 244.700 L906.200 240.800 L916.500 244.200 L908 250.200 L906.900 248.100 L696.600 294.500Z" fill="#ec3843"/>
  <path d="M455 468 L753.300 514.300 L753.900 511.400 L762 516.600 L752.200 520.500 L752.700 517.900 L454.900 469Z" fill="#ec3843"/>
  <!-- labels -->
  <text x="964.500" y="212" font-size="23.500" fill="#111">栈1</text>
  <text x="819" y="423.500" font-size="23.500" fill="#111">栈B</text>
  <text x="993.500" y="420.500" font-size="23.500" fill="#111">栈A</text>
  <g font-family="DejaVu Sans Condensed, DejaVu Sans, Liberation Sans, sans-serif" font-size="18.300" fill="#e63e48">
  <text x="927.500" y="318" textLength="141.500" lengthAdjust="spacingAndGlyphs">main(String[] ...)</text>
  <text x="785.300" y="586.800" textLength="41" lengthAdjust="spacingAndGlyphs">ran()</text>
  <text x="967.500" y="535" textLength="82.500" lengthAdjust="spacingAndGlyphs">meThod()</text>
  <text x="947" y="587.200" textLength="142.500" lengthAdjust="spacingAndGlyphs">main(String[] ...)</text>
  </g>
</svg>

</body>
</html>
